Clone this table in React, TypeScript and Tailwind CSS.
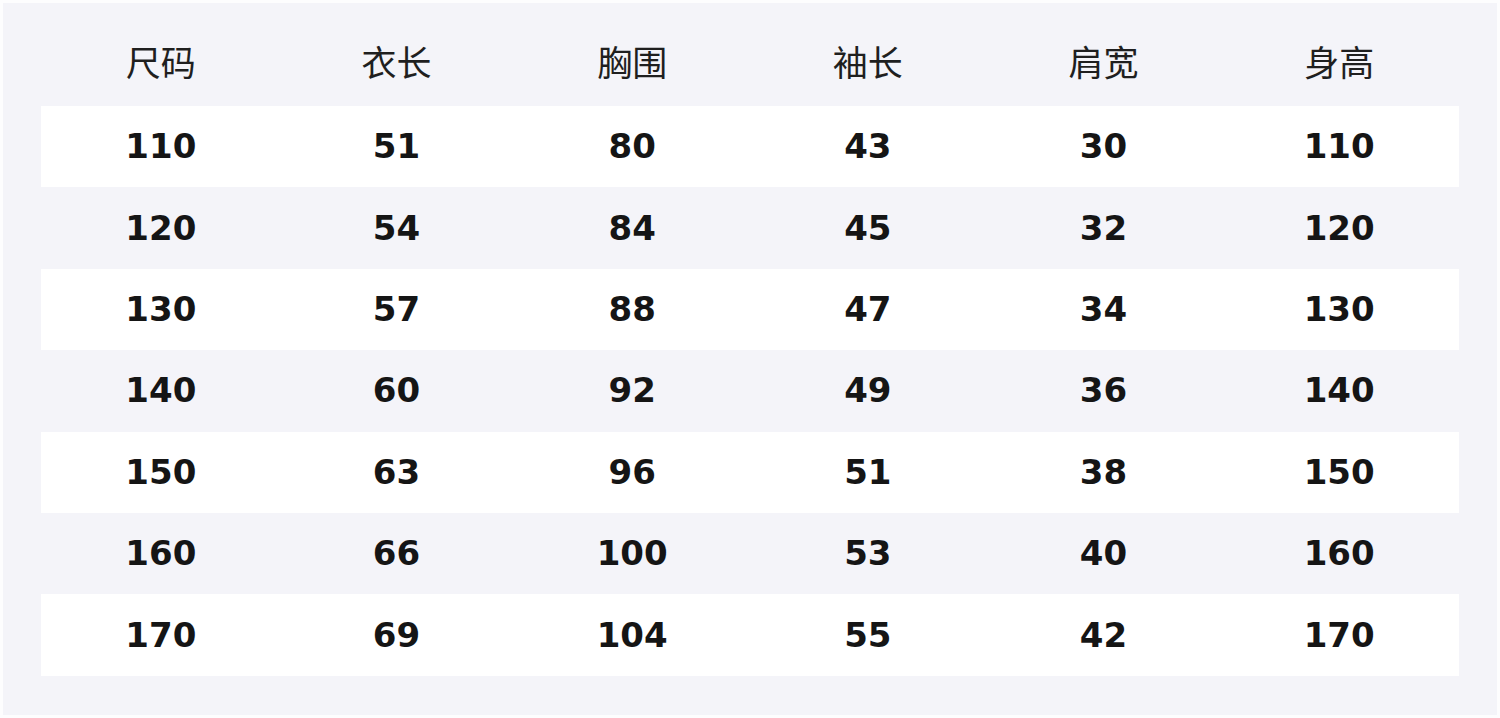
import React from "react";

const headers = ["尺码", "衣长", "胸围", "袖长", "肩宽", "身高"];
const rows = [
  [110, 51, 80, 43, 30, 110],
  [120, 54, 84, 45, 32, 120],
  [130, 57, 88, 47, 34, 130],
  [140, 60, 92, 49, 36, 140],
  [150, 63, 96, 51, 38, 150],
  [160, 66, 100, 53, 40, 160],
  [170, 69, 104, 55, 42, 170],
];

export default function App() {
  return (
    <div className="w-[1500px] h-[718px] bg-[#fdfdfe] p-[3px]">
      <div className="h-[712px] bg-[#f4f4f9] px-[38px] pt-[22px] pb-[40px]">
        <div className="grid grid-cols-6 h-[81px] px-[2px] pb-[8px] items-center text-center text-[35px] text-[#1f1f1f] [font-family:'Noto_Sans_CJK_SC',sans-serif]">
          {headers.map((h) => (
            <div key={h}>{h}</div>
          ))}
        </div>
        {rows.map((r, i) => (
          <div
            key={i}
            className={`grid grid-cols-6 h-[81.4px] px-[2px] items-center text-center text-[34px] font-bold text-[#151515] [font-family:'DejaVu_Sans',sans-serif] ${
              i % 2 === 0 ? "bg-white" : "bg-transparent"
            }`}
          >
            {r.map((v, j) => (
              <div key={j}>{v}</div>
            ))}
          </div>
        ))}
      </div>
    </div>
  );
}
